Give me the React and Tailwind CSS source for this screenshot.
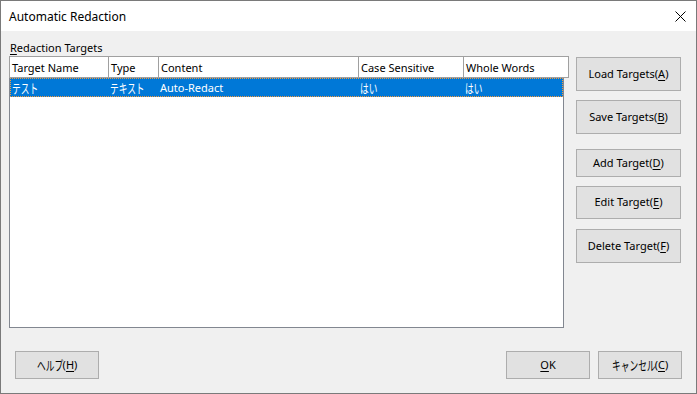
import React from "react";

const font = { fontFamily: '"Noto Sans", "Noto Sans CJK JP", sans-serif' };

// Japanese text in the dialog uses a narrow UI face; squeeze the CJK glyphs
function J({ children, w, up = false }) {
  return (
    <span
      className={
        "inline-block whitespace-nowrap text-[13px] leading-[16px] scale-x-[0.67] origin-left " +
        (up ? "-translate-y-[1px] " : "") +
        w
      }
    >
      {children}
    </span>
  );
}

function Btn({ children, className = "" }) {
  return (
    <div
      className={
        "flex items-center justify-center bg-[#e1e1e1] border border-[#adadad] text-[11px] text-black " +
        className
      }
    >
      {children}
    </div>
  );
}

const columns = [
  { name: "Target Name", w: "w-[99px]" },
  { name: "Type", w: "w-[50px]" },
  { name: "Content", w: "w-[200px]" },
  { name: "Case Sensitive", w: "w-[105px]" },
  { name: "Whole Words", w: "w-[105px]" },
];

const row = [
  <J up w="w-[26px]">テスト</J>,
  <J up w="w-[35px]">テキスト</J>,
  "Auto-Redact",
  <J up w="w-[17px]">はい</J>,
  <J up w="w-[17px]">はい</J>,
];

export default function App() {
  return (
    <div
      style={font}
      className="relative w-[697px] h-[394px] border border-[#7a7a7a] bg-[#f0f0f0] flex flex-col overflow-hidden"
    >
      {/* window behind peeking at top */}
      <div className="absolute top-[-1px] left-[517px] w-[18px] h-[1px] bg-[#8a2b20]" />
      <div className="absolute top-[-1px] left-[560px] w-[23px] h-[1px] bg-[#8a8a20]" />
      <div className="absolute top-[-1px] left-[610px] w-[20px] h-[1px] bg-[#5a6a80]" />

      {/* title bar */}
      <div className="h-[30px] bg-white flex items-center justify-between pl-[8px] pr-[9px]">
        <span className="text-[12px] text-black mt-[1px]">Automatic Redaction</span>
        <svg width="11" height="11" viewBox="0 0 11 11" className="mr-[1px]">
          <path d="M0.5 0.5 L10.5 10.5 M10.5 0.5 L0.5 10.5" stroke="#000" strokeWidth="1" />
        </svg>
      </div>

      {/* body */}
      <div className="flex-1 flex flex-col pl-[8px] pt-[8px]">
        <div className="h-[17px] leading-[17px] text-[11px] text-black ml-[1px]">
          <span className="underline underline-offset-2">R</span>edaction Targets
        </div>

        <div className="flex">
          {/* list view */}
          <div className="w-[555px] h-[272px] border border-[#828790] bg-white">
            <div className="-mt-[1px] -ml-[1px] w-[560px] h-[22px] flex border border-[#a0a0a0] bg-white">
              {columns.map((c, i) => (
                <div
                  key={c.name}
                  className={
                    c.w +
                    " shrink-0 h-full flex items-center pl-[2px] pt-[2px] text-[11px] text-black " +
                    (i < columns.length - 1 ? "border-r border-[#a0a0a0]" : "")
                  }
                >
                  {c.name}
                </div>
              ))}
            </div>
            <div className="h-[19px] w-[553px] bg-[#0078d7] outline outline-1 outline-dotted outline-[#f59a3c] -outline-offset-1 flex text-white text-[11px]">
              {row.map((t, i) => (
                <div
                  key={i}
                  className={columns[i].w + " shrink-0 flex items-center pl-[2px] pt-[2px] " + (i === 0 ? "-mr-[1px]" : "")}
                >
                  {t}
                </div>
              ))}
            </div>
          </div>

          {/* side buttons */}
          <div className="ml-[12px] w-[105px] flex flex-col">
            <Btn className="mt-[1px] h-[34px]">
              Load Targets(<span className="underline underline-offset-2">A</span>)
            </Btn>
            <Btn className="mt-[9px] h-[34px]">
              Save Targets(<span className="underline underline-offset-2">B</span>)
            </Btn>
            <Btn className="mt-[15px] h-[28px]">
              Add Target(<span className="underline underline-offset-2">D</span>)
            </Btn>
            <Btn className="mt-[9px] h-[33px]">
              Edit Target(<span className="underline underline-offset-2">E</span>)
            </Btn>
            <Btn className="mt-[10px] h-[34px]">
              Delete Target(<span className="underline underline-offset-2">F</span>)
            </Btn>
          </div>
        </div>
      </div>

      {/* bottom buttons */}
      <div className="flex items-center pl-[14px] pr-[14px] mb-[14px]">
        <Btn className="w-[84px] h-[28px]">
          <J w="w-[26px]">ヘルプ</J>(<span className="underline underline-offset-2">H</span>)
        </Btn>
        <div className="flex-1" />
        <Btn className="w-[84px] h-[28px]">
          <span className="underline underline-offset-2">O</span>K
        </Btn>
        <Btn className="w-[84px] h-[28px] ml-[8px]">
          <J w="w-[43px]">キャンセル</J>(<span className="underline underline-offset-2">C</span>)
        </Btn>
      </div>
    </div>
  );
}
